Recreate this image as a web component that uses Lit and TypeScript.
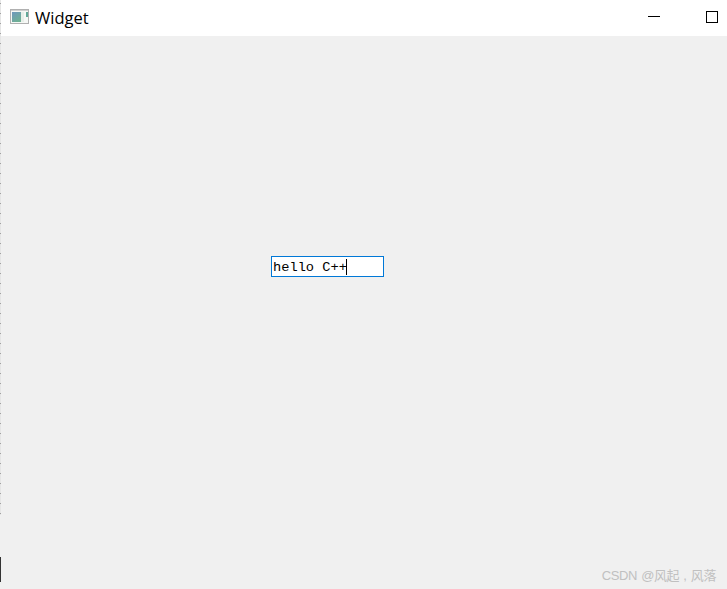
import { LitElement, html, css } from "lit";
import { customElement } from "lit/decorators.js";

@customElement("app-root")
export class AppRoot extends LitElement {
  static styles = css`
    :host { display: block; width: 727px; height: 589px; overflow: hidden; }
    .window { position: relative; display: flex; flex-direction: column; width: 727px; height: 589px; background: #f0f0f0; }
    .titlebar { display: flex; align-items: flex-start; height: 36px; flex: none; background: #fff; padding: 9px 0 0 10px; box-sizing: border-box; }
    .app-icon { display: block; flex: none; }
    .title { margin: -1px 0 0 6px; font: 16.5px/20px "Open Sans", "Noto Sans", sans-serif; color: #000; }
    .controls { margin-left: auto; display: flex; align-items: flex-start; gap: 46px; padding: 2px 9px 0 0; }
    .min { width: 12px; height: 1px; margin-top: 5px; background: #000; }
    .max { width: 10px; height: 10px; border: 1px solid #000; background: transparent; }
    .body { flex: 1; padding: 220px 0 0 271px; }
    .edit { display: flex; align-items: center; width: 113px; height: 21px; box-sizing: border-box; border: 1px solid #0078d7; background: #fff; padding: 1px 0 0 1px; }
    .value { font: 13.7px/19px "Liberation Mono", monospace; color: #000; white-space: pre; }
    .caret { width: 1px; height: 16px; background: #000; margin-left: -1px; }
    .ticks { position: absolute; left: 0; top: 0; width: 1px; height: 515px; background: repeating-linear-gradient(to bottom, #e6e6e6 0 3px, #a0a0a0 3px 4px, #e6e6e6 4px 10px); }
    .mark { position: absolute; left: 0; top: 557px; width: 1px; height: 25px; background: #333; }
    .watermark { position: absolute; right: 11px; bottom: 5px; font: 13px/17px "Liberation Sans", "Noto Sans CJK SC", sans-serif; color: #c0c0c0; white-space: pre; letter-spacing: -0.4px; word-spacing: 1px; }
  `;

  render() {
    return html`
      <div class="window">
        <div class="titlebar">
          <svg class="app-icon" width="19" height="15" viewBox="0 0 19 15">
            <defs>
              <linearGradient id="g" x1="0" y1="0" x2="0.6" y2="1">
                <stop offset="0" stop-color="#6f97bd" />
                <stop offset="1" stop-color="#6fb094" />
              </linearGradient>
            </defs>
            <rect x="0.5" y="0.5" width="18" height="14" fill="#f6f8f5" stroke="#b0b0b0" />
            <rect x="1" y="1" width="17" height="1" fill="#cfcfcf" />
            <rect x="2" y="3" width="9" height="10" fill="url(#g)" />
            <rect x="11" y="3" width="3" height="10" fill="#e8efe9" />
            <rect x="16" y="3" width="2" height="5" fill="#62a898" />
          </svg>
          <span class="title">Widget</span>
          <div class="controls">
            <div class="min"></div>
            <div class="max"></div>
          </div>
        </div>
        <div class="body">
          <div class="edit"><span class="value">hello C++</span><span class="caret"></span></div>
        </div>
        <div class="ticks"></div>
        <div class="mark"></div>
        <div class="watermark">CSDN @风起 , 风落</div>
      </div>
    `;
  }
}
